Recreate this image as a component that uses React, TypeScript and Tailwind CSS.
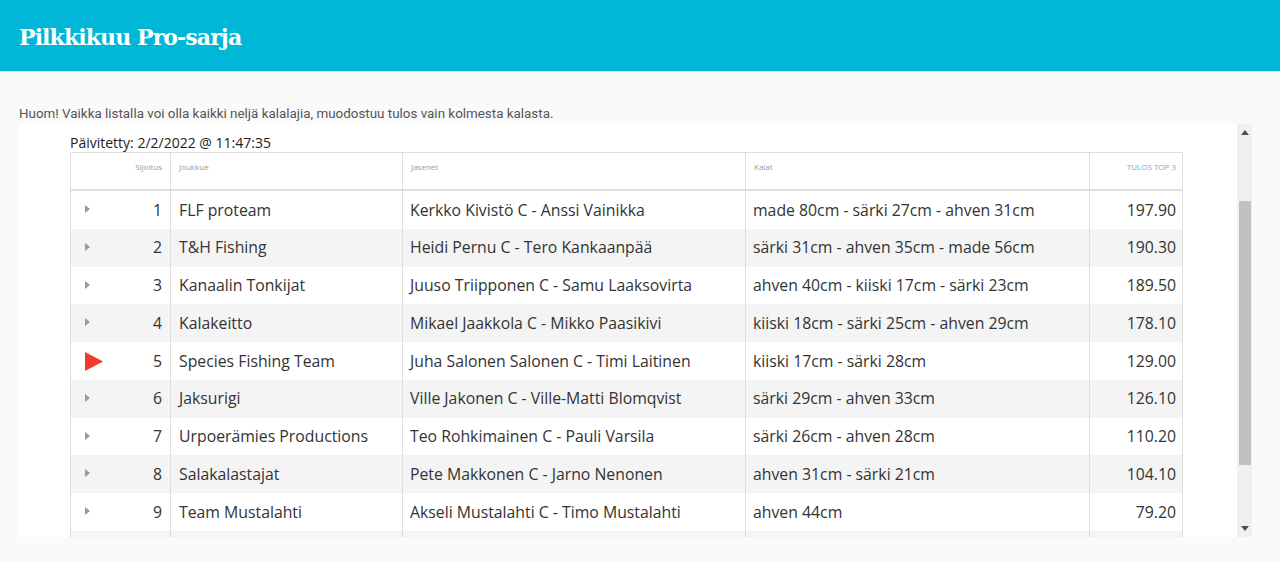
import React from "react";

const rows = [
  { n: 1, team: "FLF proteam", members: "Kerkko Kivistö C - Anssi Vainikka", fish: "made 80cm - särki 27cm - ahven 31cm", score: "197.90" },
  { n: 2, team: "T&H Fishing", members: "Heidi Pernu C - Tero Kankaanpää", fish: "särki 31cm - ahven 35cm - made 56cm", score: "190.30" },
  { n: 3, team: "Kanaalin Tonkijat", members: "Juuso Triipponen C - Samu Laaksovirta", fish: "ahven 40cm - kiiski 17cm - särki 23cm", score: "189.50" },
  { n: 4, team: "Kalakeitto", members: "Mikael Jaakkola C - Mikko Paasikivi", fish: "kiiski 18cm - särki 25cm - ahven 29cm", score: "178.10" },
  { n: 5, team: "Species Fishing Team", members: "Juha Salonen Salonen C - Timi Laitinen", fish: "kiiski 17cm - särki 28cm", score: "129.00", active: true },
  { n: 6, team: "Jaksurigi", members: "Ville Jakonen C - Ville-Matti Blomqvist", fish: "särki 29cm - ahven 33cm", score: "126.10" },
  { n: 7, team: "Urpoerämies Productions", members: "Teo Rohkimainen C - Pauli Varsila", fish: "särki 26cm - ahven 28cm", score: "110.20" },
  { n: 8, team: "Salakalastajat", members: "Pete Makkonen C - Jarno Nenonen", fish: "ahven 31cm - särki 21cm", score: "104.10" },
  { n: 9, team: "Team Mustalahti", members: "Akseli Mustalahti C - Timo Mustalahti", fish: "ahven 44cm", score: "79.20" },
  { n: 10, team: "", members: "", fish: "", score: "" },
];

const cols = "grid grid-cols-[100px_232px_343px_344px_94px]";

function Caret({ active }: { active?: boolean }) {
  if (active) {
    return (
      <svg width="18" height="19" viewBox="0 0 18 19" className="absolute left-[14px] top-[10px]">
        <polygon points="0,0 18,9.5 0,19" fill="#f43a2e" />
      </svg>
    );
  }
  return (
    <svg width="5" height="8" viewBox="0 0 5 8" className="absolute left-[14px] top-[14px]">
      <polygon points="0,0 5,4 0,8" fill="#9a9a9a" />
    </svg>
  );
}

export default function App() {
  return (
    <div className="w-[1280px] h-[562px] bg-[#fafafa] overflow-hidden" style={{ fontFamily: "'Open Sans', 'Noto Sans', sans-serif" }}>
      <header className="h-[72px] bg-[#00b7d7] border-b border-[#d8eef3] flex items-center px-[19px]">
        <h1 className="text-white font-bold text-[22px] tracking-[-0.9px] pt-[3px]" style={{ fontFamily: "'DejaVu Serif', serif" }}>
          Pilkkikuu Pro-sarja
        </h1>
      </header>
      <p className="mt-[34px] ml-[19px] text-[13.4px] leading-[16px] text-[#555]" style={{ fontFamily: "Roboto, sans-serif" }}>
        Huom! Vaikka listalla voi olla kaikki neljä kalalajia, muodostuu tulos vain kolmesta kalasta.
      </p>
      <div className="ml-[19px] mt-[2px] w-[1233px] h-[413px] flex">
        <div className="flex-1 bg-white overflow-hidden pl-[51px] pt-[9px]">
          <div className="text-[14px] leading-[19px] text-[#222]">Päivitetty: 2/2/2022 @ 11:47:35</div>
          <div className="w-[1113px] border-l border-r border-t border-[#dedede]">
            <div className={`${cols} h-[38px] border-b-2 border-[#dedede] text-[8px] text-[#9a9a9a]`}>
              <div className="text-right pr-[8px] pt-[8px] border-r border-[#dedede]">Sijoitus</div>
              <div className="pl-[8px] pt-[8px] border-r border-[#dedede]">Joukkue</div>
              <div className="pl-[8px] pt-[8px] border-r border-[#dedede]">Jasenet</div>
              <div className="pl-[8px] pt-[8px] border-r border-[#dedede]">Kalat</div>
              <div className="text-right pr-[8px] pt-[8px] text-[#8fa3b0]">TULOS TOP 3</div>
            </div>
            {rows.map((r, i) => (
              <div
                key={r.n}
                className={`${cols} h-[37.75px] items-center text-[15.8px] text-[#333] ${i % 2 === 1 ? "bg-[#f4f4f4]" : "bg-white"}`}
              >
                <div className="relative h-full flex items-center justify-end pr-[8px] pt-[1px] border-r border-[#dedede]">
                  {r.score && <Caret active={r.active} />}
                  <span>{r.score ? r.n : ""}</span>
                </div>
                <div className="h-full flex items-center pl-[8px] pt-[1px] border-r border-[#dedede] whitespace-nowrap">{r.team}</div>
                <div className="h-full flex items-center pl-[7px] pt-[1px] border-r border-[#dedede] whitespace-nowrap">{r.members}</div>
                <div className="h-full flex items-center pl-[7px] pt-[1px] border-r border-[#dedede] whitespace-nowrap">{r.fish}</div>
                <div className="h-full flex items-center justify-end pr-[8px] pt-[1px]">{r.score}</div>
              </div>
            ))}
          </div>
        </div>
        <div className="w-[15px] bg-[#f0f0f0] flex flex-col items-center">
          <svg width="8" height="5" viewBox="0 0 8 5" className="mt-[6px]">
            <polygon points="0,5 4,0 8,5" fill="#505050" />
          </svg>
          <div className="w-[12px] h-[264px] bg-[#c1c1c1] mt-[66px]" />
          <div className="flex-1" />
          <svg width="8" height="5" viewBox="0 0 8 5" className="mb-[6px]">
            <polygon points="0,0 8,0 4,5" fill="#505050" />
          </svg>
        </div>
      </div>
    </div>
  );
}
